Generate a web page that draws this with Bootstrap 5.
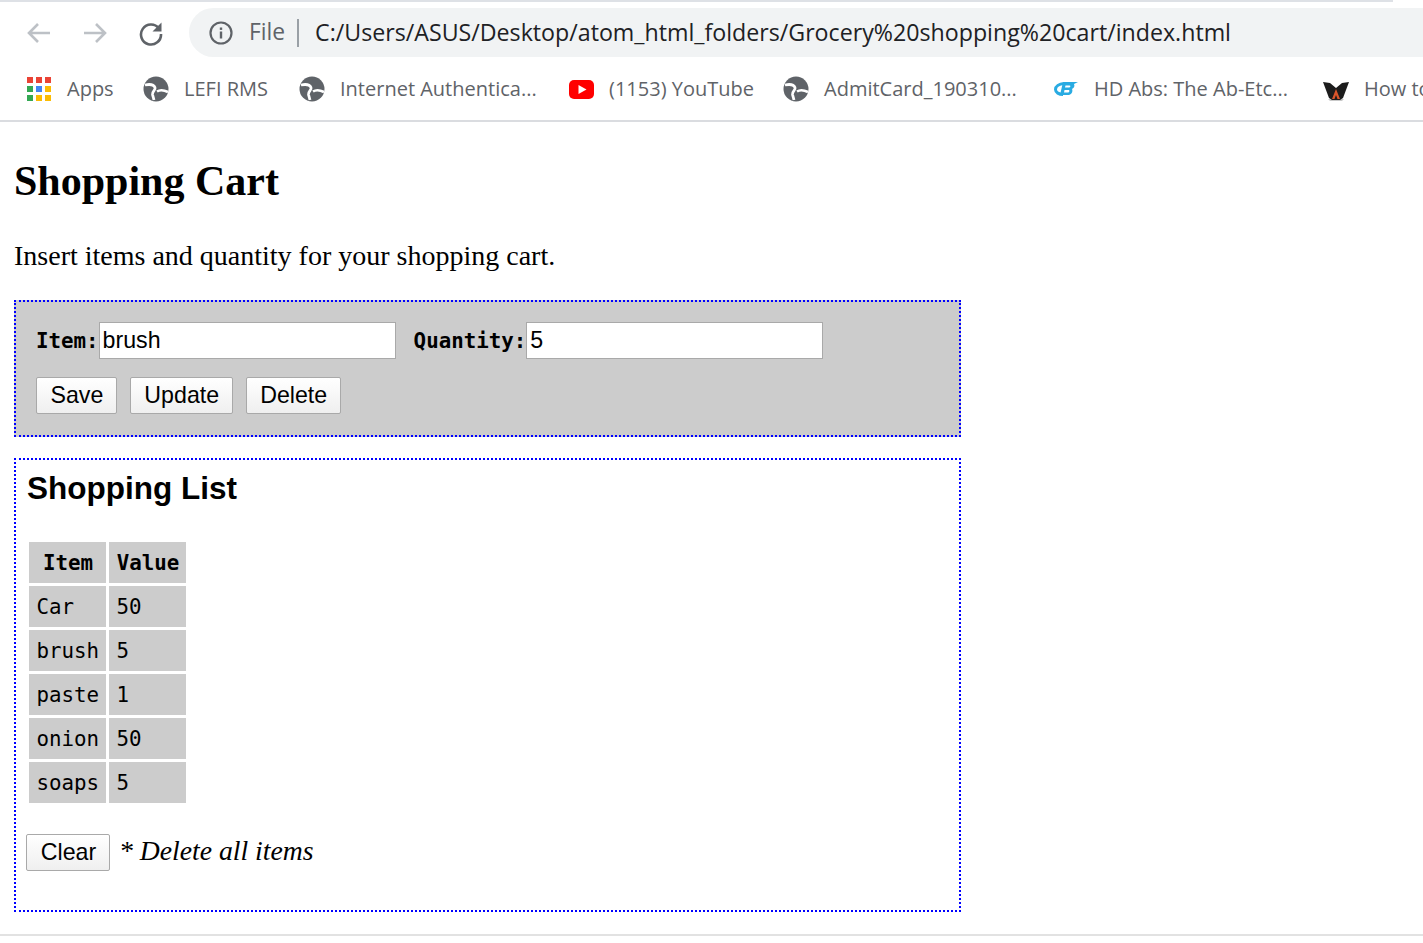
<!DOCTYPE html>
<html lang="en">
<head>
<meta charset="utf-8">
<title>Shopping Cart</title>
<link href="https://cdn.jsdelivr.net/npm/bootstrap@5.3.0/dist/css/bootstrap.min.css" rel="stylesheet">
<style>
html,body{height:943px;overflow:hidden}
body{background:#fff;color:#000;font-family:"Liberation Serif",serif}
.chrome-top{height:122px;border-bottom:2px solid #dadce0;background:#fff;overflow:hidden;font-family:"Open Sans","Noto Sans",sans-serif}
.tab-edge{height:2px;width:1393px;background:#dee1e6}
.tool-row{height:49px;margin-top:6px;padding-left:26px}
.nav-ico{width:26px;height:26px;flex:none}
.nav-gap{margin-right:30px}
.omni{margin-left:25px;flex:1;height:49px;background:#f1f3f4;border-radius:25px 0 0 25px;padding-left:19px;font-size:23.2px;white-space:nowrap;color:#202124}
.omni-file{color:#5f6368;margin-left:15px;font-size:22.8px}
.omni-sep{width:2px;height:28px;background:#9aa0a6;margin:0 16px 0 12px}
.mark-row{height:40px;margin-top:12px;padding-left:26px;white-space:nowrap;font-size:20px;color:#5f6368}
.mark-item{display:flex;align-items:center;flex:none}
.mark-item svg{width:26px;height:26px;flex:none;margin-right:15px}
.page-wrap{padding:0 14px;height:814px;border-bottom:2px solid #e2e2e2}
.page-title{font-family:"Liberation Serif",serif;font-weight:700;font-size:42px;line-height:48px;margin:0;padding-top:35px}
.page-intro{font-size:28px;line-height:32px;margin:35px 0 0;padding:0}
.form-panel{width:947px;height:137px;margin-top:28px;background:#ccc;border:2px dotted #00f;padding:20px 20px 0}
.list-panel{width:947px;height:454px;margin-top:21px;border:2px dotted #00f;padding:0 10px}
.fld-label{font-family:"DejaVu Sans Mono",monospace;font-weight:700;font-size:20.8px;margin:0;padding-top:2px}
.fld-input{width:297px;height:37px;border:1px solid #a9a9a9;border-radius:0;background:#fff;font-family:"Liberation Sans",sans-serif;font-size:23.2px;padding:0 3px;color:#000;outline:0}
.fld-gap{margin-right:18px}
.plain-btn{height:37px;border:1px solid #a9a9a9;border-radius:2px;background:linear-gradient(#fff,#efefef);font-family:"Liberation Sans",sans-serif;font-size:23.2px;color:#000;padding:0 12.5px 0 13.5px;line-height:33px}
.plain-btn:hover{border-color:#a9a9a9;color:#000;background:linear-gradient(#fff,#efefef)}
.clear-btn{width:84px}
.btn-line{margin-top:18px;gap:13px}
.list-title{font-family:"Liberation Sans",sans-serif;font-weight:700;font-size:31.5px;line-height:38px;margin:0;padding:9px 0 0 1px}
.item-table{border-collapse:separate;border-spacing:3px;margin:32px 0 0 0;font-family:"DejaVu Sans Mono",monospace;font-size:20.8px}
.item-table th,.item-table td{background:#ccc;height:41px;width:77px;padding:2px 6.5px 0 7.5px;line-height:39px}
.item-table th{text-align:center;font-weight:700}
.clear-line{margin-top:28px}
.clear-note{font-style:italic;font-size:27.7px;line-height:32px;margin-left:9px;position:relative;top:-2px}
</style>
</head>
<body>
<header class="chrome-top">
  <div class="tab-edge"></div>
  <div class="tool-row d-flex align-items-center">
    <svg class="nav-ico nav-gap" viewBox="0 0 26 26" fill="none" stroke="#bdc1c6" stroke-width="2.6"><path d="M24 13H3M12 4l-9 9 9 9"/></svg>
    <svg class="nav-ico nav-gap" viewBox="0 0 26 26" fill="none" stroke="#bdc1c6" stroke-width="2.6"><path d="M2 13h21M14 4l9 9-9 9"/></svg>
    <svg class="nav-ico" viewBox="0 0 26 26"><path d="M21 8.500A10 10 0 1 0 23 14" fill="none" stroke="#5f6368" stroke-width="2.6"/><path d="M23.500 2.500v9h-9z" fill="#5f6368"/></svg>
    <div class="omni d-flex align-items-center">
      <svg class="nav-ico" viewBox="0 0 26 26" fill="none"><circle cx="13" cy="13" r="10.500" stroke="#5f6368" stroke-width="2.200"/><rect x="11.800" y="11.500" width="2.400" height="7" fill="#5f6368"/><rect x="11.800" y="7.500" width="2.400" height="2.400" fill="#5f6368"/></svg>
      <span class="omni-file">File</span><span class="omni-sep"></span><span>C:/Users/ASUS/Desktop/atom_html_folders/Grocery%20shopping%20cart/index.html</span>
    </div>
  </div>
  <div class="mark-row d-flex align-items-center">
    <div class="mark-item" style="width:117px"><svg viewBox="0 0 26 26"><rect x="1" y="1" width="6" height="6" fill="#ea4335"/><rect x="10" y="1" width="6" height="6" fill="#ea4335"/><rect x="19" y="1" width="6" height="6" fill="#ea4335"/><rect x="1" y="10" width="6" height="6" fill="#34a853"/><rect x="10" y="10" width="6" height="6" fill="#4285f4"/><rect x="19" y="10" width="6" height="6" fill="#fbbc05"/><rect x="1" y="19" width="6" height="6" fill="#34a853"/><rect x="10" y="19" width="6" height="6" fill="#fbbc05"/><rect x="19" y="19" width="6" height="6" fill="#fbbc05"/></svg>Apps</div>
    <div class="mark-item" style="width:156px"><svg viewBox="0 0 26 26"><use href="#globe"/></svg>LEFI RMS</div>
    <div class="mark-item" style="width:269px"><svg viewBox="0 0 26 26"><use href="#globe"/></svg>Internet Authentica...</div>
    <div class="mark-item" style="width:215px"><svg viewBox="0 0 26 26"><rect x="1" y="4" width="25" height="19" rx="5" fill="#f00"/><path d="M10.500 9l8 4.500-8 4.500z" fill="#fff"/></svg>(1153) YouTube</div>
    <div class="mark-item" style="width:270px"><svg viewBox="0 0 26 26"><use href="#globe"/></svg>AdmitCard_190310...</div>
    <div class="mark-item" style="width:270px"><svg viewBox="0 0 26 26"><path d="M11 7.500C6 8 2.500 10.500 2.500 13.500S6 18.500 10 18.500" fill="none" stroke="#29abe2" stroke-width="3"/><path d="M10 6h15l-4 2c1 2 0 4-2 5 1 2 0 5-3 6H7z" fill="#29abe2"/><path d="M12.500 9.500h4c1.500 0 1 2-.5 2h-4zM11.500 14h4c1.500 0 1 2.500-.5 2.500h-4z" fill="#fff"/></svg>HD Abs: The Ab-Etc...</div>
    <div class="mark-item"><svg viewBox="0 0 26 26"><path d="M5 23h16l-2 2H7z" fill="#c9c9c9"/><path d="M0 6l7 1 6 5 6-5 7-1-6 16-3 2h-8l-3-2z" fill="#1c1c1c"/><path d="M13 13l4 10h-2.500L13 19l-1.500 4H9z" fill="#d9552b"/></svg>How to</div>
  </div>
</header>
<svg width="0" height="0" class="d-block" aria-hidden="true"><defs><g id="globe"><circle cx="13" cy="13" r="12.500" fill="#5f6368"/><path d="M2 9C7 8 11 9 12 11.500S9 15 9.500 18.500L11 24" fill="none" stroke="#fff" stroke-width="2.800"/><path d="M14 15.500C17 13.500 21 14 25 16" fill="none" stroke="#fff" stroke-width="2.600"/></g></defs></svg>
<main class="page-wrap">
  <h1 class="page-title">Shopping Cart</h1>
  <p class="page-intro">Insert items and quantity for your shopping cart.</p>
  <form class="form-panel" onsubmit="return false">
    <div class="d-flex align-items-center">
      <label class="fld-label" for="item">Item:</label><input class="fld-input fld-gap" id="item" value="brush">
      <label class="fld-label" for="qty">Quantity:</label><input class="fld-input" id="qty" value="5">
    </div>
    <div class="btn-line d-flex">
      <button class="btn plain-btn" type="button">Save</button>
      <button class="btn plain-btn" type="button">Update</button>
      <button class="btn plain-btn" type="button">Delete</button>
    </div>
  </form>
  <section class="list-panel">
    <h2 class="list-title">Shopping List</h2>
    <table class="item-table">
      <thead><tr><th>Item</th><th>Value</th></tr></thead>
      <tbody>
        <tr><td>Car</td><td>50</td></tr>
        <tr><td>brush</td><td>5</td></tr>
        <tr><td>paste</td><td>1</td></tr>
        <tr><td>onion</td><td>50</td></tr>
        <tr><td>soaps</td><td>5</td></tr>
      </tbody>
    </table>
    <div class="clear-line d-flex align-items-center">
      <button class="btn plain-btn clear-btn" type="button">Clear</button>
      <span class="clear-note">* Delete all items</span>
    </div>
  </section>
</main>
</body>
</html>
